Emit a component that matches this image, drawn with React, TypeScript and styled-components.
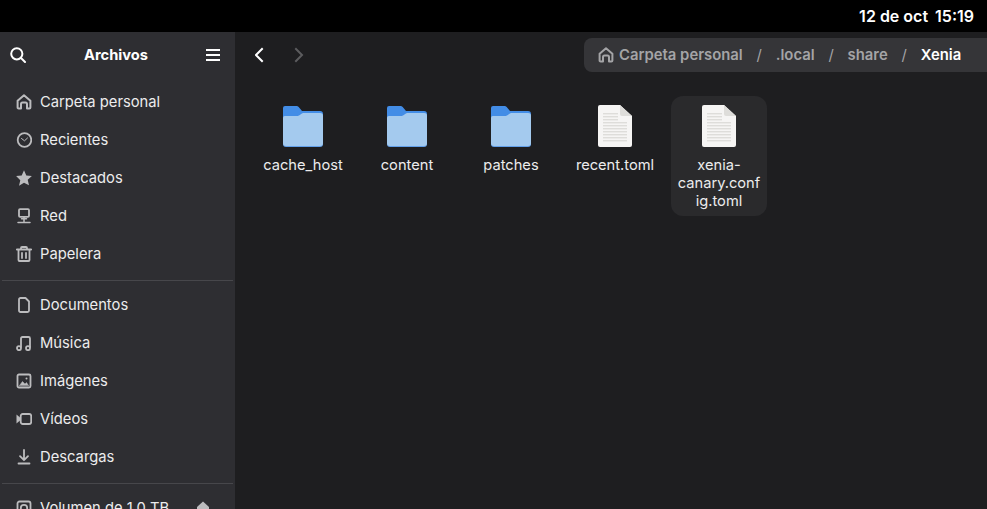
import React from "react";
import styled, { createGlobalStyle } from "styled-components";

const GlobalStyle = createGlobalStyle`
  html, body {
    margin: 0;
    padding: 0;
    height: 100%;
    overflow: hidden;
    background: #000;
  }
  body {
    font-family: "Inter", "Noto Sans", sans-serif;
    font-size: 14.67px;
  }
  * {
    box-sizing: border-box;
  }
`;

type IconProps = { size?: number };

const Glyph: React.FC<React.PropsWithChildren<IconProps>> = ({ size = 16, children }) => (
  <svg width={size} height={size} viewBox="0 0 16 16" fill="none" stroke="currentColor" strokeWidth="1.8" strokeLinecap="round" strokeLinejoin="round">
    {children}
  </svg>
);

const HomeIcon = () => (
  <Glyph>
    <path strokeWidth="2" d="M2 14.2a1 1 0 0 1-.4-.8V6.8L8 1.3l6.4 5.5v6.6a1 1 0 0 1-1 1H11V10a1.5 1.5 0 0 0-1.5-1.5h-3A1.5 1.5 0 0 0 5 10v4.4H2.6" />
  </Glyph>
);
const ClockIcon = () => (
  <Glyph>
    <circle cx="8.5" cy="8" r="6.8" />
    <path d="M5.5 6.5 8.5 8.8 11.5 6" strokeWidth="1" />
  </Glyph>
);
const StarIcon = () => (
  <Glyph>
    <path d="M8 .3l2.3 5.2 5.6.5-4.2 3.7 1.3 5.5L8 12.8l-5 2.9 1.3-5.5L.1 6l5.6-.5z" fill="currentColor" stroke="none" />
  </Glyph>
);
const NetworkIcon = () => (
  <Glyph>
    <rect x="3" y="1.2" width="10" height="7.6" rx="1" />
    <path d="M8 9v4.5M2 14.5h12M5.5 10.8h5" strokeWidth="1.5" />
  </Glyph>
);
const TrashIcon = () => (
  <Glyph>
    <path d="M.8 3.5h14.4M5 3.5V2a1 1 0 0 1 1-1h4a1 1 0 0 1 1 1v1.5M2.5 4v10a1 1 0 0 0 1 1h9a1 1 0 0 0 1-1V4M6 7v5M10 7v5" />
  </Glyph>
);
const DocumentIcon = () => (
  <Glyph>
    <path d="M3 2.5A1.5 1.5 0 0 1 4.5 1h5L13 4.5v9a1.5 1.5 0 0 1-1.5 1.5h-7A1.5 1.5 0 0 1 3 13.5z" />
  </Glyph>
);
const MusicIcon = () => (
  <Glyph>
    <path d="M5 12V3.5C5 2.5 5.5 2 6.5 2h6c1 0 1.5.5 1.5 1.5V12" />
    <circle cx="3" cy="13.2" r="2" />
    <circle cx="12" cy="13.2" r="2" />
  </Glyph>
);
const ImageIcon = () => (
  <Glyph>
    <rect x="1.5" y="1.5" width="13" height="13" rx="1.5" />
    <path d="M3.5 12.5 6.5 8.5 9 11l1.5-1.5 2 3z" fill="currentColor" strokeWidth="0.5" />
    <circle cx="10.5" cy="5.5" r="1" fill="currentColor" stroke="none" />
  </Glyph>
);
const VideoIcon = () => (
  <Glyph>
    <path d="M.5 3.5v9l3.5-3V6.5z" fill="currentColor" stroke="none" />
    <rect x="4.7" y="3" width="10.5" height="10" rx="2" />
  </Glyph>
);
const DownloadIcon = () => (
  <Glyph>
    <path d="M8 1v10M4 7.2 8 11.2 12 7.2M2.5 14.5h11" />
  </Glyph>
);
const DriveIcon = () => (
  <Glyph>
    <rect x="1.5" y="1.5" width="13" height="13" rx="2" />
    <circle cx="8" cy="8" r="3.2" />
  </Glyph>
);
const EjectIcon = () => (
  <Glyph>
    <path d="M8 1.5 14 7v4H2V7z" fill="currentColor" stroke="none" />
    <path d="M2 13.5h12" />
  </Glyph>
);

const FolderIcon = () => (
  <svg width="40" height="41" viewBox="0 0 40 41">
    <path d="M2 0h11.5a3 3 0 0 1 2.2 1L19 5h18a3 3 0 0 1 3 3v30H0V2a2 2 0 0 1 2-2z" fill="#438de6" />
    <path d="M0 12a2 2 0 0 1 2-2h12.5a3 3 0 0 0 2-.8L19 7.5a2 2 0 0 1 1.5-.5H37a3 3 0 0 1 3 3v28a3 3 0 0 1-3 3H3a3 3 0 0 1-3-3z" fill="#62a0ea" />
    <path d="M0 12a2 2 0 0 1 2-2h12.5a3 3 0 0 0 2-.8L19 7.5a2 2 0 0 1 1.5-.5H37a3 3 0 0 1 3 3v27a3 3 0 0 1-3 3H3a3 3 0 0 1-3-3z" fill="#a4caee" />
  </svg>
);

const fileLines = [8, 11, 14, 17, 20, 23, 26, 29, 32, 35];

const FileIcon = () => (
  <svg width="34" height="42" viewBox="0 0 34 42">
    <path d="M2 0h20l12 11v29a2 2 0 0 1-2 2H2a2 2 0 0 1-2-2V2a2 2 0 0 1 2-2z" fill="#f6f5f4" />
    <path d="M22 0l12 11H24a2 2 0 0 1-2-2z" fill="#deddda" />
    {fileLines.map((y, i) => (
      <rect key={y} x="5" y={y} width={i < 3 ? 15 : 24} height="1.4" fill="#deddda" />
    ))}
  </svg>
);

const places = [
  { icon: <HomeIcon />, label: "Carpeta personal" },
  { icon: <ClockIcon />, label: "Recientes" },
  { icon: <StarIcon />, label: "Destacados" },
  { icon: <NetworkIcon />, label: "Red" },
  { icon: <TrashIcon />, label: "Papelera" },
];

const folders = [
  { icon: <DocumentIcon />, label: "Documentos" },
  { icon: <MusicIcon />, label: "Música" },
  { icon: <ImageIcon />, label: "Imágenes" },
  { icon: <VideoIcon />, label: "Vídeos" },
  { icon: <DownloadIcon />, label: "Descargas" },
];

const files = [
  { name: "cache_host", kind: "folder" },
  { name: "content", kind: "folder" },
  { name: "patches", kind: "folder" },
  { name: "recent.toml", kind: "file" },
  { name: "xenia-canary.config.toml", kind: "file", hovered: true },
];

const crumbs = ["Carpeta personal", ".local", "share"];

const App: React.FC = () => {
  return (
    <Screen>
      <GlobalStyle />
      <TopBar>
        <Clock>12 de oct</Clock>
        <Clock>15:19</Clock>
      </TopBar>
      <Window>
        <Sidebar>
          <SidebarHeader>
            <HeaderIcon>
              <svg width="16" height="16" viewBox="0 0 16 16" fill="none" stroke="currentColor" strokeWidth="2" strokeLinecap="round">
                <circle cx="6.8" cy="6.8" r="5.6" />
                <path d="M11 11l4 4" />
              </svg>
            </HeaderIcon>
            <Title>Archivos</Title>
            <HeaderIcon>
              <svg width="14" height="12" viewBox="0 0 14 12" fill="currentColor">
                <rect y="0" width="14" height="2" />
                <rect y="5" width="14" height="2" />
                <rect y="10" width="14" height="2" />
              </svg>
            </HeaderIcon>
          </SidebarHeader>
          <Section>
            {places.map((item) => (
              <Row key={item.label}>
                <RowIcon>{item.icon}</RowIcon>
                {item.label}
              </Row>
            ))}
          </Section>
          <Separator />
          <Section>
            {folders.map((item) => (
              <Row key={item.label}>
                <RowIcon>{item.icon}</RowIcon>
                {item.label}
              </Row>
            ))}
          </Section>
          <Separator />
          <Section>
            <Row>
              <RowIcon>
                <DriveIcon />
              </RowIcon>
              Volumen de 1,0 TB
              <Eject>
                <EjectIcon />
              </Eject>
            </Row>
          </Section>
        </Sidebar>
        <Main>
          <Toolbar>
            <NavButton>
              <svg width="10" height="16" viewBox="0 0 10 16" fill="none" stroke="currentColor" strokeWidth="2" strokeLinecap="square">
                <path d="M7 2 1 8l6 6" />
              </svg>
            </NavButton>
            <NavButton $disabled>
              <svg width="10" height="16" viewBox="0 0 10 16" fill="none" stroke="currentColor" strokeWidth="2" strokeLinecap="square">
                <path d="M2 2l6 6-6 6" />
              </svg>
            </NavButton>
            <PathBar>
              <CrumbIcon>
                <HomeIcon />
              </CrumbIcon>
              {crumbs.map((crumb) => (
                <React.Fragment key={crumb}>
                  <Crumb>{crumb}</Crumb>
                  <Slash>/</Slash>
                </React.Fragment>
              ))}
              <Crumb $current>Xenia</Crumb>
            </PathBar>
          </Toolbar>
          <FileGrid>
            {files.map((file) => (
              <FileCell key={file.name} $hovered={file.hovered}>
                <FileThumb>{file.kind === "folder" ? <FolderIcon /> : <FileIcon />}</FileThumb>
                <FileName>{file.name}</FileName>
              </FileCell>
            ))}
          </FileGrid>
        </Main>
      </Window>
    </Screen>
  );
};

const Screen = styled.div`
  display: flex;
  flex-direction: column;
  width: 987px;
  height: 509px;
  overflow: hidden;
`;

const TopBar = styled.div`
  display: flex;
  justify-content: flex-end;
  align-items: center;
  gap: 7px;
  flex: 0 0 32px;
  padding-right: 13px;
  background: #000;
`;

const Clock = styled.span`
  color: #fff;
  font-weight: 600;
  font-size: 16px;
`;

const Window = styled.div`
  display: flex;
  flex: 1;
  min-height: 0;
  background: #1e1e20;
`;

const Sidebar = styled.div`
  flex: 0 0 235px;
  background: #2e2e32;
  color: #ececed;
  margin-right: 1px;
`;

const SidebarHeader = styled.div`
  display: flex;
  align-items: center;
  justify-content: space-between;
  height: 46px;
  padding: 0 15px 0 10px;
`;

const HeaderIcon = styled.span`
  display: flex;
  color: #fff;
`;

const Title = styled.span`
  color: #fff;
  font-weight: 700;
  font-size: 14.67px;
`;

const Section = styled.div`
  padding-top: 4px;
`;

const Row = styled.div`
  display: flex;
  align-items: center;
  height: 38px;
  padding: 2px 0 0 16px;
  font-size: 14.75px;
  white-space: nowrap;
`;

const RowIcon = styled.span`
  display: flex;
  flex: 0 0 24px;
  color: #bcbcbe;
`;

const Eject = styled.span`
  display: flex;
  margin-left: 26px;
  color: #bcbcbe;
`;

const Separator = styled.div`
  height: 1px;
  margin: 8px 2px 0;
  background: #47474b;
`;

const Main = styled.div`
  flex: 1;
  min-width: 0;
`;

const Toolbar = styled.div`
  display: flex;
  align-items: center;
  height: 46px;
  padding-left: 19px;
`;

const NavButton = styled.span<{ $disabled?: boolean }>`
  display: flex;
  justify-content: center;
  width: 10px;
  margin-right: 29px;
  color: ${(p) => (p.$disabled ? "#5c5c5e" : "#fff")};
`;

const PathBar = styled.div`
  display: flex;
  align-items: center;
  height: 34px;
  margin-left: 251px;
  flex: 1;
  padding-left: 14px;
  border-radius: 8px 0 0 8px;
  background: #353538;
  font-weight: 600;
  font-size: 14.85px;
`;

const CrumbIcon = styled.span`
  display: flex;
  margin-right: 5px;
  color: #a4a4a6;
`;

const Crumb = styled.span<{ $current?: boolean }>`
  color: ${(p) => (p.$current ? "#fff" : "#a4a4a6")};
`;

const Slash = styled.span`
  width: 33px;
  text-align: center;
  color: #a4a4a6;
  font-weight: 400;
`;

const FileGrid = styled.div`
  display: flex;
  align-items: flex-start;
  gap: 8px;
  padding: 18px 0 0 19px;
`;

const FileCell = styled.div<{ $hovered?: boolean }>`
  width: 96px;
  padding: 0 6px 6px;
  border-radius: 12px;
  background: ${(p) => (p.$hovered ? "#2a2a2c" : "transparent")};
`;

const FileThumb = styled.div`
  display: flex;
  align-items: center;
  justify-content: center;
  height: 60px;
`;

const FileName = styled.div`
  color: #ececed;
  font-size: 14.67px;
  line-height: 18px;
  text-align: center;
  overflow-wrap: anywhere;
`;

export default App;
